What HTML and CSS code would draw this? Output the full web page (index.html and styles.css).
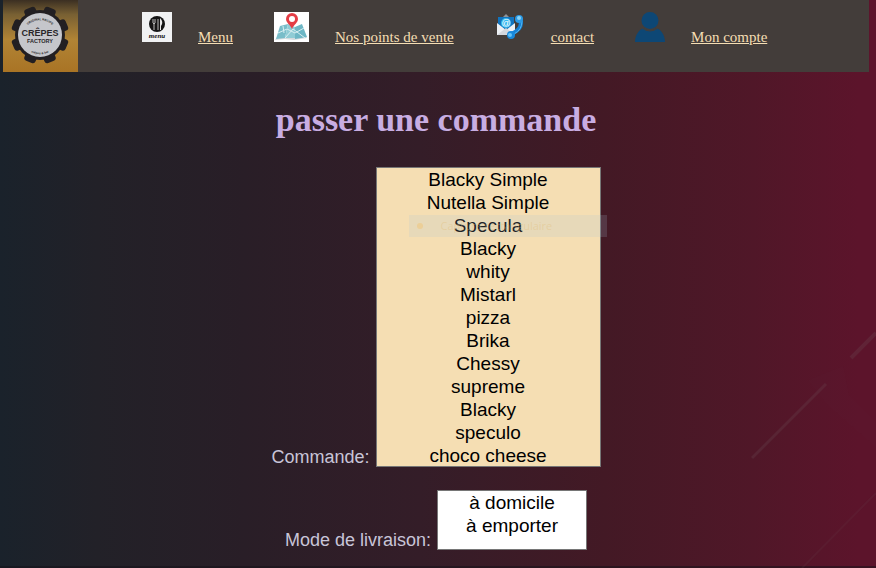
FILE: index.html
```html
<!DOCTYPE html>
<html lang="fr">
<head>
<meta charset="utf-8">
<title>Crêpes Factory</title>
<link rel="stylesheet" href="styles.css">
</head>
<body>
<svg class="streaks" width="126" height="238" viewBox="0 0 126 238" aria-hidden="true">
  <g fill="none" stroke="#6a5057">
    <path d="M2 128 76 54" stroke-width="3" opacity=".25"/>
    <path d="M101 28 126 3" stroke-width="4" opacity=".25"/>
    <path d="M52 238 126 163" stroke-width="2" opacity=".12"/>
  </g>
  <path d="M58 50 93 36 99 65 126 93V117L78 75Z" fill="#693940" opacity=".06"/>
</svg>
<header class="bar">
  <svg class="logo" width="75" height="72" viewBox="0 0 75 72" role="img" aria-label="Crêpes Factory">
    <defs>
      <linearGradient id="gold" x1="0" y1="0" x2="0" y2="1">
        <stop offset="0" stop-color="#3b2f22"/><stop offset=".2" stop-color="#786033"/><stop offset=".55" stop-color="#b18435"/><stop offset="1" stop-color="#a97425"/>
      </linearGradient>
      <path id="arc-top" d="M21 30A18 18 0 0 1 53 30"/>
      <path id="arc-bottom" d="M19 43A20 20 0 0 0 55 43"/>
    </defs>
    <path fill="url(#gold)" d="M0 0h75v72H0z"/>
    <g fill="#221f22">
      <circle cx="37" cy="35" r="25"/>
      <rect x="31" y="6" width="12" height="58" rx="3" transform="rotate(22.5 37 35)"/>
      <rect x="31" y="6" width="12" height="58" rx="3" transform="rotate(67.5 37 35)"/>
      <rect x="31" y="6" width="12" height="58" rx="3" transform="rotate(112.5 37 35)"/>
      <rect x="31" y="6" width="12" height="58" rx="3" transform="rotate(157.5 37 35)"/>
    </g>
    <circle cx="37" cy="35" r="22" fill="#c5c6cb"/>
    <g fill="#29262a" font-family="Liberation Sans, sans-serif" font-weight="bold" text-anchor="middle">
      <text x="37" y="36" font-size="9">CRÊPES</text>
      <text x="37" y="43" font-size="5.5">FACTORY</text>
      <text font-size="3"><textPath href="#arc-top" startOffset="50%">ORIGINAL RECIPE</textPath></text>
      <text font-size="3"><textPath href="#arc-bottom" startOffset="50%">crêpes &amp; bar</textPath></text>
    </g>
  </svg>
  <nav class="menu">
    <span class="entry">
      <svg width="30" height="30" viewBox="0 0 30 30" aria-hidden="true">
        <path fill="#f1f2f3" d="M0 0h30v30H0z"/>
        <circle cx="15" cy="12" r="8" fill="#151515"/>
        <path d="M11 7v4q1 2 2 0V7M12 11v7M16 7v11" fill="none" stroke="#bbb" stroke-width="1"/>
        <path d="M18 6q4 4 1 8v4h-1z" fill="#e9e9e9"/>
        <text x="15" y="26" font-size="7" font-family="Liberation Serif, serif" font-weight="bold" font-style="italic" text-anchor="middle" fill="#111">menu</text>
      </svg>
      <a href="#menu">Menu</a>
    </span>
    <span class="entry">
      <svg width="35" height="30" viewBox="0 0 35 30" aria-hidden="true">
        <path fill="#fff" d="M0 0h35v30H0z"/>
        <path fill="#d5dcdf" d="M3 25 1 28l10-1 9 1 13-2-3-4z"/>
        <path fill="#79bdc9" d="m6 14 8-2-3 14-9 1z"/>
        <path fill="#90ccd5" d="m14 12 7 3v11l-10 0z"/>
        <path fill="#6eb7c5" d="m21 15 7-3 5 13-12 2z"/>
        <path d="m4 21 9-4 8 4 9-5M11 26l8-9 12 9M9 14l1 7" fill="none" stroke="#d9eff2"/>
        <path d="M18 1a6 6 0 0 0-6 6c0 4 4 5 6 10 2-5 6-6 6-10a6 6 0 0 0-6-6" fill="#e43d45"/>
        <circle cx="18" cy="7" r="3" fill="#fff"/>
      </svg>
      <a href="#points">Nos points de vente</a>
    </span>
    <span class="entry">
      <svg width="30" height="30" viewBox="0 0 30 30" aria-hidden="true">
        <path d="m8 5 3-3 3 3z" fill="#8c9399"/>
        <path d="M3 5h16v14H3z" fill="#1273bd"/>
        <path d="m2 11 9 7 9-7v12H2z" fill="#edf0f4"/>
        <path d="m2 23 9-7 9 7" fill="#d3d7dd"/>
        <circle cx="11" cy="11" r="5" fill="#35baf0"/>
        <text x="11" y="14" font-size="9" font-family="Liberation Sans, sans-serif" text-anchor="middle" fill="#fff">@</text>
        <path d="M25 6q4 11-9 16" fill="none" stroke="#1681d5" stroke-width="4"/>
        <path d="M27 9q0 9-8 13" fill="none" stroke="#53b9f2" stroke-width="1"/>
        <circle cx="24" cy="7" r="4" fill="#2b9ae5"/><circle cx="24" cy="6" r="2" fill="#8bd4f7"/>
        <circle cx="16" cy="23" r="4" fill="#1789dc"/><circle cx="15" cy="23" r="2" fill="#65c2f5"/>
      </svg>
      <a href="#contact">contact</a>
    </span>
    <span class="entry">
      <svg width="30" height="30" viewBox="0 0 30 30" aria-hidden="true">
        <g fill="#0d4775"><circle cx="15" cy="8.5" r="8.5"/><path d="M0 30C0 23 4 18 8 16q7 5 14 0c4 2 8 7 8 14z"/></g>
        <path d="M7 16q8 6 16 0" fill="none" stroke="#433d3a"/>
      </svg>
      <a href="#compte">Mon compte</a>
    </span>
  </nav>
</header>
<main class="page">
  <h1>passer une commande</h1>
  <form class="order">
    <div class="field">
      <label for="commande">Commande:</label>
      <div class="list">
        <select id="commande" class="dishes" size="13" multiple>
          <option>Blacky Simple</option>
          <option>Nutella Simple</option>
          <option>Specula</option>
          <option>Blacky</option>
          <option>whity</option>
          <option>Mistarl</option>
          <option>pizza</option>
          <option>Brika</option>
          <option>Chessy</option>
          <option>supreme</option>
          <option>Blacky</option>
          <option>speculo</option>
          <option>choco cheese</option>
        </select>
        <div class="ghost"><span class="dot"></span><span class="hint">Capture rectangulaire</span></div>
      </div>
    </div>
    <div class="field">
      <label for="livraison">Mode de livraison:</label>
      <select id="livraison" class="delivery" size="2" multiple>
        <option>à domicile</option>
        <option>à emporter</option>
      </select>
    </div>
  </form>
</main>
</body>
</html>
```

FILE: styles.css
```css
* {
  box-sizing: border-box;
}

body {
  margin: 0;
  padding: 0 7px 0 3px;
  min-height: 100vh;
  background: linear-gradient(90deg, #1a222b 0%, #222128 11%, #291e27 28%, #341d28 48%, #431925 69%, #501728 86%, #5c142b 98%);
  border-bottom: 2px solid rgb(20 16 24 / 50%);
}

.streaks {
  position: absolute;
  right: 0;
  top: 330px;
}

.bar {
  display: flex;
  align-items: flex-start;
  background: #433d3a;
}

.logo {
  flex: none;
}

.menu {
  display: flex;
  gap: 41px;
  padding: 12px 0 0 64px;
}

.entry {
  display: flex;
  align-items: baseline;
  gap: 26px;
}

.menu a {
  color: #f5deb3;
  font: 15px/20px "Liberation Serif", serif;
  white-space: nowrap;
}

h1 {
  margin: 0;
  padding: 28px 0 27px;
  color: #c8ade2;
  font: bold 34px/40px "Liberation Serif", serif;
  text-align: center;
}

.order {
  display: flex;
  flex-direction: column;
  align-items: center;
  gap: 23px;
}

.field {
  display: flex;
  align-items: flex-end;
  gap: 6px;
}

label {
  color: #c8c5d8;
  font: 18px/20px "Liberation Sans", sans-serif;
}

.list {
  position: relative;
}

select {
  display: block;
  margin: 0;
  padding: 1px 0 0;
  border: 1px solid #767676;
  border-radius: 0;
  overflow: hidden;
  font: 19px/23px "Liberation Sans", sans-serif;
  text-align: center;
  color: #000;
}

option {
  min-height: 23px;
  padding: 0;
  line-height: 23px;
}

.dishes {
  width: 225px;
  height: 300px;
  background: #f5deb3;
}

.delivery {
  width: 150px;
  height: 60px;
  background: #fff;
}

.ghost {
  position: absolute;
  left: 33px;
  top: 48px;
  width: 198px;
  display: flex;
  align-items: center;
  background: rgb(170 195 215 / 18%);
  pointer-events: none;
}

.dot {
  width: 6px;
  height: 6px;
  margin: 8px 18px 8px 8px;
  border-radius: 50%;
  background: rgb(240 200 130 / 60%);
}

.hint {
  color: rgb(225 185 115 / 35%);
  font: 11px/16px "Open Sans", sans-serif;
}
```
